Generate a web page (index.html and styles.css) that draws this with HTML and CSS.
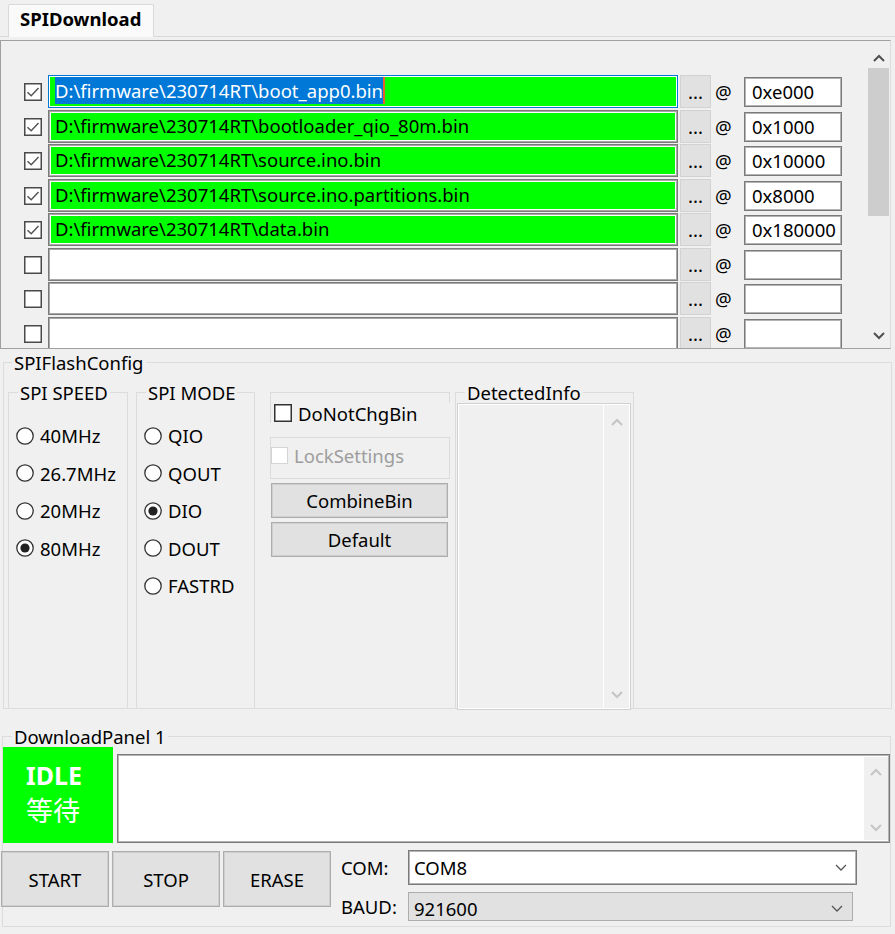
FILE: index.html
```html
<!DOCTYPE html>
<html>
<head>
<meta charset="utf-8">
<title>SPIDownload</title>
<link rel="stylesheet" href="styles.css">
</head>
<body>
<div class="tabstrip"><div class="tab">SPIDownload</div></div>
<div class="tabpage">
  <div class="filepanel">
    <div class="rows">
      <div class="row">
        <svg class="chk" viewBox="0 0 18 18"><rect x="0.75" y="0.75" width="16.5" height="16.5" fill="#fff" stroke="#4a4a4a" stroke-width="1.5"/><polyline points="3.5,9.2 7.2,12.8 14.5,5" fill="none" stroke="#555" stroke-width="1.5"/></svg>
        <div class="path green focus"><span class="sel">D:\firmware\230714RT\boot_app0.bin</span></div>
        <div class="dots">...</div><span class="at">@</span><div class="addr">0xe000</div>
      </div>
      <div class="row">
        <svg class="chk" viewBox="0 0 18 18"><rect x="0.75" y="0.75" width="16.5" height="16.5" fill="#fff" stroke="#4a4a4a" stroke-width="1.5"/><polyline points="3.5,9.2 7.2,12.8 14.5,5" fill="none" stroke="#555" stroke-width="1.5"/></svg>
        <div class="path green">D:\firmware\230714RT\bootloader_qio_80m.bin</div>
        <div class="dots">...</div><span class="at">@</span><div class="addr">0x1000</div>
      </div>
      <div class="row">
        <svg class="chk" viewBox="0 0 18 18"><rect x="0.75" y="0.75" width="16.5" height="16.5" fill="#fff" stroke="#4a4a4a" stroke-width="1.5"/><polyline points="3.5,9.2 7.2,12.8 14.5,5" fill="none" stroke="#555" stroke-width="1.5"/></svg>
        <div class="path green">D:\firmware\230714RT\source.ino.bin</div>
        <div class="dots">...</div><span class="at">@</span><div class="addr">0x10000</div>
      </div>
      <div class="row">
        <svg class="chk" viewBox="0 0 18 18"><rect x="0.75" y="0.75" width="16.5" height="16.5" fill="#fff" stroke="#4a4a4a" stroke-width="1.5"/><polyline points="3.5,9.2 7.2,12.8 14.5,5" fill="none" stroke="#555" stroke-width="1.5"/></svg>
        <div class="path green">D:\firmware\230714RT\source.ino.partitions.bin</div>
        <div class="dots">...</div><span class="at">@</span><div class="addr">0x8000</div>
      </div>
      <div class="row">
        <svg class="chk" viewBox="0 0 18 18"><rect x="0.75" y="0.75" width="16.5" height="16.5" fill="#fff" stroke="#4a4a4a" stroke-width="1.5"/><polyline points="3.5,9.2 7.2,12.8 14.5,5" fill="none" stroke="#555" stroke-width="1.5"/></svg>
        <div class="path green">D:\firmware\230714RT\data.bin</div>
        <div class="dots">...</div><span class="at">@</span><div class="addr">0x180000</div>
      </div>
      <div class="row">
        <svg class="chk" viewBox="0 0 18 18"><rect x="0.75" y="0.75" width="16.5" height="16.5" fill="#fff" stroke="#4a4a4a" stroke-width="1.5"/></svg>
        <div class="path"></div>
        <div class="dots">...</div><span class="at">@</span><div class="addr"></div>
      </div>
      <div class="row">
        <svg class="chk" viewBox="0 0 18 18"><rect x="0.75" y="0.75" width="16.5" height="16.5" fill="#fff" stroke="#4a4a4a" stroke-width="1.5"/></svg>
        <div class="path"></div>
        <div class="dots">...</div><span class="at">@</span><div class="addr"></div>
      </div>
      <div class="row">
        <svg class="chk" viewBox="0 0 18 18"><rect x="0.75" y="0.75" width="16.5" height="16.5" fill="#fff" stroke="#4a4a4a" stroke-width="1.5"/></svg>
        <div class="path"></div>
        <div class="dots">...</div><span class="at">@</span><div class="addr"></div>
      </div>
    </div>
    <div class="vscroll">
      <div class="arrbox up"><svg width="12" height="8" viewBox="0 0 12 8"><polyline points="1,7 6,2 11,7" fill="none" stroke="#505050" stroke-width="2"/></svg></div>
      <div class="thumb"></div>
      <div class="track"></div>
      <div class="arrbox down"><svg width="12" height="8" viewBox="0 0 12 8"><polyline points="1,1 6,6 11,1" fill="none" stroke="#505050" stroke-width="2"/></svg></div>
    </div>
  </div>

  <fieldset class="group flashcfg">
    <legend>SPIFlashConfig</legend>
    <div class="cfgcols">
      <fieldset class="sub speed">
        <legend>SPI SPEED</legend>
        <div class="radios">
          <div class="radio"><svg viewBox="0 0 18 18"><circle cx="9" cy="9" r="8.2" fill="#fff" stroke="#333" stroke-width="1.3"/></svg><span>40MHz</span></div>
          <div class="radio"><svg viewBox="0 0 18 18"><circle cx="9" cy="9" r="8.2" fill="#fff" stroke="#333" stroke-width="1.3"/></svg><span>26.7MHz</span></div>
          <div class="radio"><svg viewBox="0 0 18 18"><circle cx="9" cy="9" r="8.2" fill="#fff" stroke="#333" stroke-width="1.3"/></svg><span>20MHz</span></div>
          <div class="radio"><svg viewBox="0 0 18 18"><circle cx="9" cy="9" r="8.2" fill="#fff" stroke="#333" stroke-width="1.3"/><circle cx="9" cy="9" r="4.6" fill="#222"/></svg><span>80MHz</span></div>
        </div>
      </fieldset>
      <fieldset class="sub mode">
        <legend>SPI MODE</legend>
        <div class="radios">
          <div class="radio"><svg viewBox="0 0 18 18"><circle cx="9" cy="9" r="8.2" fill="#fff" stroke="#333" stroke-width="1.3"/></svg><span>QIO</span></div>
          <div class="radio"><svg viewBox="0 0 18 18"><circle cx="9" cy="9" r="8.2" fill="#fff" stroke="#333" stroke-width="1.3"/></svg><span>QOUT</span></div>
          <div class="radio"><svg viewBox="0 0 18 18"><circle cx="9" cy="9" r="8.2" fill="#fff" stroke="#333" stroke-width="1.3"/><circle cx="9" cy="9" r="4.6" fill="#222"/></svg><span>DIO</span></div>
          <div class="radio"><svg viewBox="0 0 18 18"><circle cx="9" cy="9" r="8.2" fill="#fff" stroke="#333" stroke-width="1.3"/></svg><span>DOUT</span></div>
          <div class="radio"><svg viewBox="0 0 18 18"><circle cx="9" cy="9" r="8.2" fill="#fff" stroke="#333" stroke-width="1.3"/></svg><span>FASTRD</span></div>
        </div>
      </fieldset>
      <div class="col3">
        <div class="box1">
          <div class="cap"></div>
          <div class="chkrow">
            <svg class="chk" viewBox="0 0 18 18"><rect x="0.75" y="0.75" width="16.5" height="16.5" fill="#fff" stroke="#333" stroke-width="1.5"/></svg>
            <span>DoNotChgBin</span>
          </div>
        </div>
        <div class="box2">
          <svg class="chk small" viewBox="0 0 17 17"><rect x="0.5" y="0.5" width="16" height="16" fill="#fff" stroke="#d4d4d4" stroke-width="1"/></svg>
          <span class="disabled">LockSettings</span>
        </div>
        <div class="btn cfgbtn first">CombineBin</div>
        <div class="btn cfgbtn">Default</div>
      </div>
      <fieldset class="sub detected">
        <legend>DetectedInfo</legend>
        <div class="listbox">
          <div class="lbmain"></div>
          <div class="lbscroll">
            <svg width="12" height="8" viewBox="0 0 12 8"><polyline points="1,7 6,2 11,7" fill="none" stroke="#c4c4c4" stroke-width="2"/></svg>
            <svg width="12" height="8" viewBox="0 0 12 8"><polyline points="1,1 6,6 11,1" fill="none" stroke="#c4c4c4" stroke-width="2"/></svg>
          </div>
        </div>
      </fieldset>
    </div>
  </fieldset>

  <fieldset class="group dlpanel">
    <legend>DownloadPanel 1</legend>
    <div class="dltop">
      <div class="status"><div class="s1">IDLE</div><div class="s2">等待</div></div>
      <div class="log">
        <div class="logmain"></div>
        <div class="logscroll">
          <svg width="12" height="8" viewBox="0 0 12 8"><polyline points="1,7 6,2 11,7" fill="none" stroke="#c4c4c4" stroke-width="2"/></svg>
          <svg width="12" height="8" viewBox="0 0 12 8"><polyline points="1,1 6,6 11,1" fill="none" stroke="#c4c4c4" stroke-width="2"/></svg>
        </div>
      </div>
    </div>
    <div class="dlbottom">
      <div class="btn big">START</div>
      <div class="btn big">STOP</div>
      <div class="btn big">ERASE</div>
      <div class="ports">
        <div class="portrow">
          <span class="plabel">COM:</span>
          <div class="combo com"><span>COM8</span><svg width="12" height="7" viewBox="0 0 12 7"><polyline points="1,1 6,6 11,1" fill="none" stroke="#555" stroke-width="1.3"/></svg></div>
        </div>
        <div class="portrow second">
          <span class="plabel">BAUD:</span>
          <div class="combo baud"><span>921600</span><svg width="12" height="7" viewBox="0 0 12 7"><polyline points="1,1 6,6 11,1" fill="none" stroke="#555" stroke-width="1.3"/></svg></div>
        </div>
      </div>
    </div>
  </fieldset>
</div>
</body>
</html>
```

FILE: styles.css
```css
* { box-sizing: border-box; }
html, body { margin: 0; padding: 0; }
body {
  width: 895px;
  height: 934px;
  overflow: hidden;
  background: #f0f0f0;
  font-family: "Noto Sans", "Noto Sans CJK SC", sans-serif;
  font-size: 18.5px;
  color: #000;
}

/* tab strip */
.tabstrip { height: 36px; padding: 4px 0 0 8px; }
.tab {
  width: 146px;
  height: 33px;
  background: #fafafa;
  border: 1px solid #d9d9d9;
  border-bottom: none;
  border-radius: 2px 2px 0 0;
  font-weight: 700;
  line-height: 27px;
  padding-left: 11px;
  position: relative;
  z-index: 1;
}
.tabpage { border-top: 1px solid #d9d9d9; padding-top: 3px; }

/* file list panel */
.filepanel {
  display: flex;
  width: 891px;
  height: 309px;
  border: 1px solid #a0a0a0;
  border-right-color: #dcdcdc;
}
.rows { flex: 1; overflow: hidden; padding: 34px 0 0 23px; }
.row { display: flex; align-items: center; height: 33px; margin-bottom: 2px; }
.row:nth-child(even) { margin-bottom: 1px; }
.chk { width: 18px; height: 18px; flex: none; display: block; }
.row .chk { margin-right: 6px; }
.path {
  width: 630px;
  height: 33px;
  flex: none;
  border: 1px solid #7a7a7a;
  box-shadow: inset 0 0 0 1px #a8a8a8, inset 0 0 0 2px #fff;
  background: #fff;
  padding-left: 6px;
  line-height: 29px;
  white-space: nowrap;
  overflow: hidden;
}
.path.green { background: #00ff00; }
.path.focus { border-color: #0078d7; box-shadow: inset 0 0 0 1px #fff; }
.sel { background: #0078d7; color: #fff; padding: 1px 0; border-right: 2px solid #e8602c; }
.dots {
  width: 31px;
  height: 33px;
  margin-left: 2px;
  background: #e1e1e1;
  border: 1px solid #d2d2d2;
  text-align: center;
  line-height: 31px;
  flex: none;
}
.at { width: 17px; margin-left: 4px; margin-right: 12px; flex: none; }
.addr {
  width: 98px;
  height: 30px;
  flex: none;
  background: #fff;
  border: 1px solid #7a7a7a;
  box-shadow: inset 0 0 0 1px #b4b4b4;
  padding-left: 7px;
  line-height: 27px;
}
.vscroll { width: 23px; flex: none; display: flex; flex-direction: column; }
.arrbox { display: flex; align-items: center; justify-content: center; flex: none; }
.arrbox.up { height: 27px; padding-top: 6px; }
.arrbox.down { height: 25px; }
.thumb { height: 148px; margin: 0 1px; background: #cdcdcd; flex: none; }
.track { flex: 1; }
.arrbox svg { display: block; flex: none; }

/* group boxes */
fieldset { margin: 0; min-width: 0; }
legend { padding: 0 2px; line-height: 21px; font-size: 18.5px; }
.group { border: 1px solid #dcdcdc; }
.flashcfg {
  margin: 3px 0 0 3px;
  width: 889px;
  height: 357px;
  padding: 9px 0 0 4px;
}
.flashcfg > legend { margin-left: 4px; }
.cfgcols { display: flex; height: 326px; }
.sub {
  border: 1px solid #dcdcdc;
  border-bottom: none;
  padding: 0 0 0 7px;
  height: 326px;
  flex: none;
}
.sub > legend { margin-left: 2px; }
.speed { width: 120px; }
.mode { width: 119px; margin-left: 8px; }
.radios { padding-top: 14px; }
.radio { display: flex; align-items: center; height: 37.5px; white-space: nowrap; }
.radio svg { width: 18px; height: 18px; margin-right: 6px; flex: none; }

.col3 { width: 180px; flex: none; margin-left: 15px; padding-top: 10px; display: flex; flex-direction: column; }
.box1 { height: 31px; border-top: 1px solid #dcdcdc; border-left: 1px solid #dcdcdc; }
.box1 .cap { height: 10px; border-right: 1px solid #dcdcdc; }
.chkrow { display: flex; align-items: center; margin-top: 1px; padding-left: 3px; height: 18px; }
.chkrow .chk { margin-right: 6px; }
.box2 {
  margin-top: 14px;
  height: 42px;
  border: 1px solid #dcdcdc;
  display: flex;
  align-items: center;
  padding-bottom: 6px;
}
.chk.small { width: 17px; height: 17px; margin-right: 6px; }
.disabled { color: #9d9d9d; }
.btn {
  background: #e1e1e1;
  border: 1px solid #adadad;
  box-shadow: inset 0 0 0 1px #cfcfcf;
  display: flex;
  align-items: center;
  justify-content: center;
  flex: none;
}
.cfgbtn { width: 177px; height: 35px; margin: 4px 0 0 1px; }
.cfgbtn.first { margin-top: 4px; }

.detected { width: 179px; margin-left: 5px; padding: 0 0 0 1px; }
.detected > legend { margin-left: 8px; }
.listbox {
  width: 174px;
  height: 307px;
  border: 1px solid #d0d0d0;
  box-shadow: inset 0 0 0 1px #fff;
  display: flex;
}
.lbmain { flex: 1; }
.lbscroll {
  width: 27px;
  border-left: 1px solid #fff;
  display: flex;
  flex-direction: column;
  align-items: center;
  justify-content: space-between;
  padding: 14px 0 10px;
}
.lbscroll svg, .logscroll svg { display: block; }

/* download panel */
.dlpanel {
  margin: 17px 0 0 2px;
  width: 889px;
  height: 201px;
  padding: 0;
}
.dlpanel > legend { margin-left: 9px; }
.dltop { display: flex; align-items: flex-end; }
.status {
  width: 110px;
  height: 96px;
  flex: none;
  background: #00ff00;
  color: #fff;
  padding: 11px 0 0 23px;
}
.s1 { font-family: "Noto Sans", sans-serif; font-weight: 700; font-size: 25px; line-height: 34px; height: 34px; }
.s2 { font-family: "Noto Sans", "Noto Sans CJK SC", sans-serif; font-size: 27px; line-height: 37px; height: 37px; }
.log {
  width: 773px;
  height: 89px;
  flex: none;
  margin-left: 4px;
  background: #fff;
  border: 1px solid #7a7a7a;
  box-shadow: inset 0 0 0 1px #b4b4b4;
  display: flex;
  padding: 2px 1px 2px 0;
}
.logmain { flex: 1; }
.logscroll {
  width: 24px;
  background: #f0f0f0;
  display: flex;
  flex-direction: column;
  align-items: center;
  justify-content: space-between;
  padding: 11px 0 8px;
}
.dlbottom { display: flex; margin: 8px 0 0 -2px; }
.big { width: 108px; height: 56px; margin-right: 3px; }
.ports { margin-left: 7px; margin-top: -1px; }
.portrow { display: flex; align-items: center; height: 35px; }
.portrow.second { margin-top: 7px; height: 29px; }
.plabel { width: 67px; flex: none; }
.combo {
  display: flex;
  align-items: center;
  justify-content: space-between;
  padding: 0 9px 0 5px;
}
.combo.com {
  width: 449px;
  height: 35px;
  background: #fff;
  border: 1px solid #7a7a7a;
  box-shadow: inset 0 0 0 1px #b4b4b4;
}
.combo.baud {
  width: 445px;
  height: 29px;
  background: #e1e1e1;
  border: 1px solid #adadad;
  padding-top: 4px;
}
.combo svg { display: block; }
```
